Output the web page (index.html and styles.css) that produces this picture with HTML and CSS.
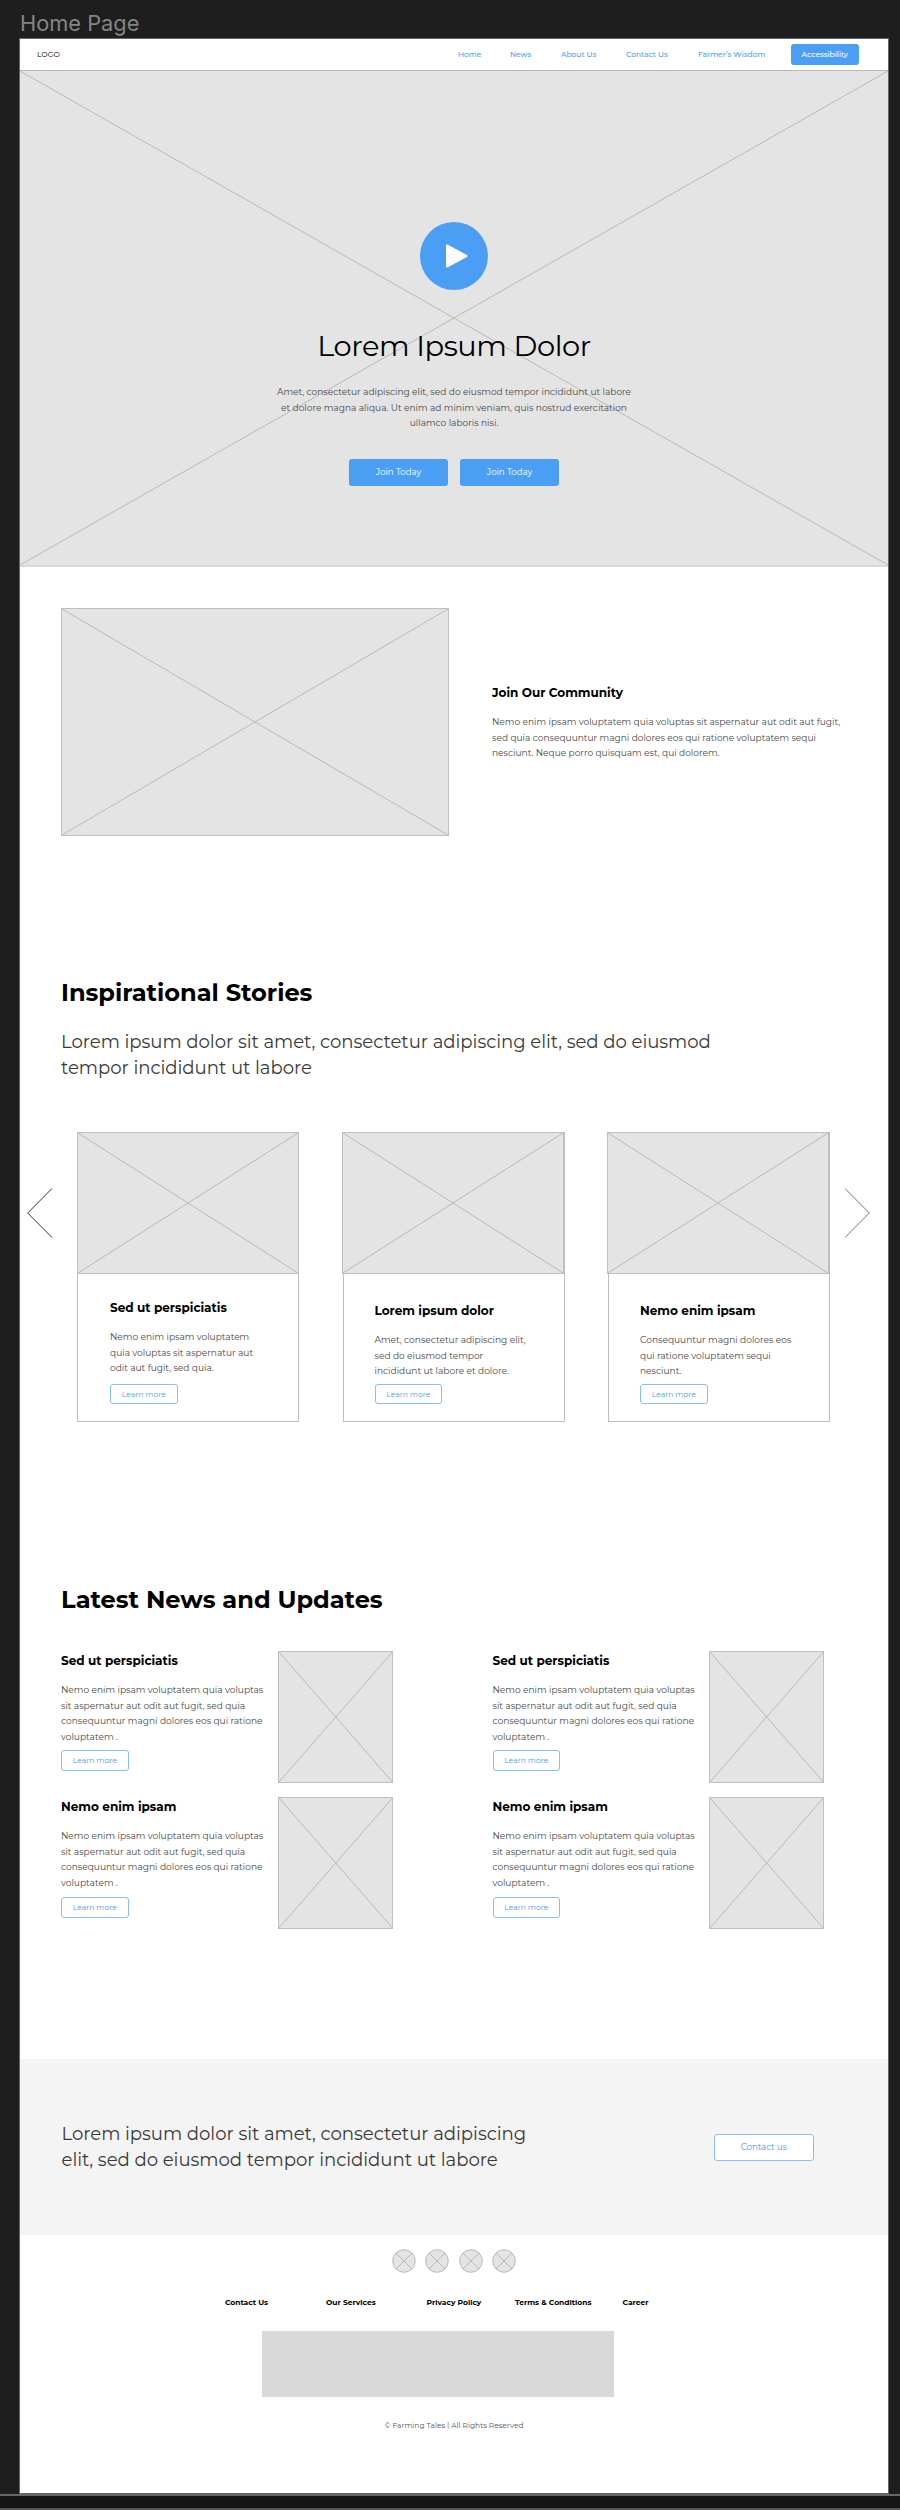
FILE: index.html
```html
<!DOCTYPE html>
<html lang="en">
<head>
<meta charset="utf-8">
<title>Home Page</title>
<link rel="stylesheet" href="styles.css">
</head>
<body>
<svg class="defs" width="0" height="0">
  <symbol id="cross" viewBox="0 0 100 100" preserveAspectRatio="none">
    <path d="M0 0L100 100M100 0L0 100" fill="none" stroke="#b9b9b9" vector-effect="non-scaling-stroke"/>
  </symbol>
</svg>
<div class="frame-label">Home Page</div>
<div class="frame">
  <header class="nav">
    <div class="logo">LOGO</div>
    <nav class="nav-links">
      <a>Home</a><a>News</a><a>About Us</a><a>Contact Us</a><a>Farmer’s Wisdom</a>
      <a class="btn btn-small btn-solid">Accessibility</a>
    </nav>
  </header>

  <section class="hero">
    <svg class="hero-cross"><use href="#cross"/></svg>
    <div class="hero-body">
      <svg class="play" viewBox="0 0 68 68"><circle cx="34" cy="34" r="34" fill="#4a9ff5"/><path d="M27 23.5V44.500L46.500 34Z" fill="#fff" stroke="#fff" stroke-width="2" stroke-linejoin="round"/></svg>
      <h1>Lorem Ipsum Dolor</h1>
      <p class="text hero-text">Amet, consectetur adipiscing elit, sed do eiusmod tempor incididunt ut labore<br>et dolore magna aliqua. Ut enim ad minim veniam, quis nostrud exercitation<br>ullamco laboris nisi.</p>
      <div class="hero-actions"><a class="btn btn-large btn-solid">Join Today</a><a class="btn btn-large btn-solid">Join Today</a></div>
    </div>
  </section>

  <section class="community">
    <div class="ph community-img"><svg><use href="#cross"/></svg></div>
    <div class="community-copy">
      <h3>Join Our Community</h3>
      <p class="text">Nemo enim ipsam voluptatem quia voluptas sit aspernatur aut odit aut fugit,<br>sed quia consequuntur magni dolores eos qui ratione voluptatem sequi<br>nesciunt. Neque porro quisquam est, qui dolorem.</p>
    </div>
  </section>

  <section class="stories">
    <h2>Inspirational Stories</h2>
    <p class="lead">Lorem ipsum dolor sit amet, consectetur adipiscing elit, sed do eiusmod<br>tempor incididunt ut labore</p>
    <div class="carousel">
      <svg class="arrow" viewBox="0 0 26 50"><path d="M25 .5L.7 25L25 49.500" fill="none" stroke="#333"/></svg>
      <div class="cards">
        <article class="card card-first">
          <div class="ph card-img"><svg><use href="#cross"/></svg></div>
          <h3>Sed ut perspiciatis</h3>
          <p class="text">Nemo enim ipsam voluptatem<br>quia voluptas sit aspernatur aut<br>odit aut fugit, sed quia.</p>
          <a class="btn btn-small btn-line">Learn more</a>
        </article>
        <article class="card">
          <div class="ph card-img"><svg><use href="#cross"/></svg></div>
          <h3>Lorem ipsum dolor</h3>
          <p class="text">Amet, consectetur adipiscing elit,<br>sed do eiusmod tempor<br>incididunt ut labore et dolore.</p>
          <a class="btn btn-small btn-line">Learn more</a>
        </article>
        <article class="card">
          <div class="ph card-img"><svg><use href="#cross"/></svg></div>
          <h3>Nemo enim ipsam</h3>
          <p class="text">Consequuntur magni dolores eos<br>qui ratione voluptatem sequi<br>nesciunt.</p>
          <a class="btn btn-small btn-line">Learn more</a>
        </article>
      </div>
      <svg class="arrow" viewBox="0 0 26 50"><path d="M1 .5L25.300 25L1 49.500" fill="none" stroke="#777"/></svg>
    </div>
  </section>

  <section class="news">
    <h2>Latest News and Updates</h2>
    <div class="news-grid">
      <article class="item">
        <div class="item-copy"><h3>Sed ut perspiciatis</h3>
        <p class="text">Nemo enim ipsam voluptatem quia voluptas<br>sit aspernatur aut odit aut fugit, sed quia<br>consequuntur magni dolores eos qui ratione<br>voluptatem .</p>
        <a class="btn btn-small btn-line">Learn more</a></div>
        <div class="ph item-img"><svg><use href="#cross"/></svg></div>
      </article>
      <article class="item">
        <div class="item-copy"><h3>Sed ut perspiciatis</h3>
        <p class="text">Nemo enim ipsam voluptatem quia voluptas<br>sit aspernatur aut odit aut fugit, sed quia<br>consequuntur magni dolores eos qui ratione<br>voluptatem .</p>
        <a class="btn btn-small btn-line">Learn more</a></div>
        <div class="ph item-img"><svg><use href="#cross"/></svg></div>
      </article>
      <article class="item item-low">
        <div class="item-copy"><h3>Nemo enim ipsam</h3>
        <p class="text">Nemo enim ipsam voluptatem quia voluptas<br>sit aspernatur aut odit aut fugit, sed quia<br>consequuntur magni dolores eos qui ratione<br>voluptatem .</p>
        <a class="btn btn-small btn-line">Learn more</a></div>
        <div class="ph item-img"><svg><use href="#cross"/></svg></div>
      </article>
      <article class="item item-low">
        <div class="item-copy"><h3>Nemo enim ipsam</h3>
        <p class="text">Nemo enim ipsam voluptatem quia voluptas<br>sit aspernatur aut odit aut fugit, sed quia<br>consequuntur magni dolores eos qui ratione<br>voluptatem .</p>
        <a class="btn btn-small btn-line">Learn more</a></div>
        <div class="ph item-img"><svg><use href="#cross"/></svg></div>
      </article>
    </div>
  </section>

  <section class="cta">
    <p class="lead">Lorem ipsum dolor sit amet, consectetur adipiscing<br>elit, sed do eiusmod tempor incididunt ut labore</p>
    <a class="btn btn-large btn-line">Contact us</a>
  </section>

  <footer class="footer">
    <div class="social">
      <svg viewBox="0 0 24 24"><circle cx="12" cy="12" r="11.300"/><path d="M4 4L20 20M20 4L4 20"/></svg>
      <svg viewBox="0 0 24 24"><circle cx="12" cy="12" r="11.300"/><path d="M4 4L20 20M20 4L4 20"/></svg>
      <svg viewBox="0 0 24 24"><circle cx="12" cy="12" r="11.300"/><path d="M4 4L20 20M20 4L4 20"/></svg>
      <svg viewBox="0 0 24 24"><circle cx="12" cy="12" r="11.300"/><path d="M4 4L20 20M20 4L4 20"/></svg>
    </div>
    <nav class="footer-links"><a>Contact Us</a><a>Our Services</a><a>Privacy Policy</a><a>Terms &amp; Conditions</a><a>Career</a></nav>
    <div class="banner"></div>
    <p class="copyright">© Farming Tales | All Rights Reserved</p>
  </footer>
</div>
<div class="dock"></div>
</body>
</html>
```
FILE: styles.css
```css
* { box-sizing: border-box; }
body { margin: 0; width: 900px; height: 2510px; overflow: hidden; background: #1e1e1e; font-family: Montserrat, Inter, "Open Sans", sans-serif; color: #000; }
h1, h2, h3, p { margin: 0; white-space: nowrap; }
svg { display: block; }
.defs { position: absolute; }

.frame-label { height: 38px; padding: 8px 0 0 20px; font: 400 21.800px/30px Inter, sans-serif; color: #848484; }
.frame { width: 870px; height: 2456px; margin-left: 19px; border: 1px solid #666; background: #fff; }

.btn { display: flex; align-items: center; justify-content: center; border-radius: 3px; white-space: nowrap; }
.btn-small { width: 67.500px; height: 20.500px; font-size: 7.640px; }
.btn-large { width: 99.500px; height: 27px; font-size: 8.600px; }
.btn-solid { background: #4a9ff5; color: #fff; }
.btn-line { background: #fff; border: 1px solid #85c0f8; color: #3f9bf3; }

.text { font-size: 9.050px; line-height: 15.600px; color: #484848; }
.lead { font-size: 18.100px; line-height: 26px; font-weight: 400; letter-spacing: -0.040px; color: #3a3a3a; }
h2 { font-size: 24.100px; line-height: 30px; font-weight: 700; }
h3 { font-size: 12.060px; line-height: 16px; font-weight: 700; }

.ph { background: #e4e4e4; border: 1px solid #bfbfbf; }
.ph svg { width: 100%; height: 100%; overflow: visible; }

.nav { display: flex; justify-content: space-between; align-items: center; height: 32px; padding: 0 29.500px 0 17px; border-bottom: 1px solid #b9b9b9; }
.logo { font-size: 7.600px; }
.nav-links { display: grid; grid-template-columns: 52px 51px 65px 72px 93px 67.500px; align-items: center; font-size: 7.500px; font-weight: 500; color: #4a9ff5; white-space: nowrap; }
.nav-links .btn { font-size: 7.500px; }

.hero { display: grid; height: 496px; background: #e4e4e4; border-bottom: 2px solid #d9d9d9; }
.hero-cross, .hero-body { grid-area: 1 / 1; }
.hero-cross { width: 868px; height: 494px; }
.hero-body { display: flex; flex-direction: column; align-items: center; padding-top: 151px; z-index: 1; }
.play { width: 68px; height: 68px; }
h1 { margin-top: 36px; font-size: 28.900px; line-height: 40px; font-weight: 400; letter-spacing: -0.450px; }
.hero-text { margin-top: 18.200px; text-align: center; }
.hero-actions { display: flex; gap: 11.500px; margin-top: 28px; }

.community { display: flex; align-items: center; height: 309px; padding: 0 0 0 41px; }
.community-img { width: 388px; height: 228px; }
.community-copy { margin-left: 43px; padding-top: 2.600px; }
.community-copy .text { margin-top: 13px; }

.stories { height: 707px; padding-top: 102.200px; }
.stories h2, .stories .lead { margin-left: 41px; }
.stories .lead { margin-top: 21px; }
.carousel { display: flex; margin: 50.800px 0 0 7px; }
.arrow { width: 26px; height: 50px; margin-top: 56.500px; }
.cards { display: flex; gap: 43.500px; margin: 0 13.500px 0 24px; }
.card { width: 222px; height: 290px; padding-left: 31px; border: 1px solid #bdbdbd; }
.card-img { width: 222px; height: 142px; margin: -1px 0 0 -33px; }
.card h3 { margin-top: 28.700px; }
.card .text { margin-top: 13.300px; }
.card .btn { margin-top: 5.200px; }
.card-first { padding-left: 32px; }
.card-first h3 { margin-top: 25.700px; }
.card-first .btn { margin-top: 8.200px; }

.news { height: 476px; padding: 2.200px 0 0 41px; }
.news-grid { display: grid; grid-template-columns: 431.500px 331.500px; row-gap: 14px; margin-top: 35.800px; }
.item { display: flex; height: 132px; }
.item-copy { width: 216.500px; padding-top: 2px; }
.item .text { margin-top: 13.300px; }
.item .btn { margin-top: 5.600px; }
.item-low .btn { margin-top: 6.600px; }
.item-img { width: 115.500px; height: 132px; }

.cta { display: flex; justify-content: space-between; align-items: center; height: 176px; padding: 0 74.500px 0 41.500px; background: #f4f4f4; }

.footer { padding-top: 14px; }
.social { display: flex; gap: 9.300px; margin-left: 372px; }
.social svg { width: 24px; height: 24px; fill: #e4e4e4; stroke: #b9b9b9; stroke-width: 1; }
.footer-links { display: grid; grid-template-columns: 101px 100.500px 88.500px 107.500px auto; margin: 24px 0 0 205px; font-size: 7.540px; line-height: 12px; font-weight: 700; white-space: nowrap; }
.banner { width: 352px; height: 66px; margin: 22px 0 0 241.500px; background: #d9d9d9; }
.copyright { margin-top: 22.500px; text-align: center; font-size: 7.480px; line-height: 12px; color: #555; }

.dock { height: 16px; background: #151515; border-top: 2px solid #666; border-bottom: 2px solid #555; }
```
